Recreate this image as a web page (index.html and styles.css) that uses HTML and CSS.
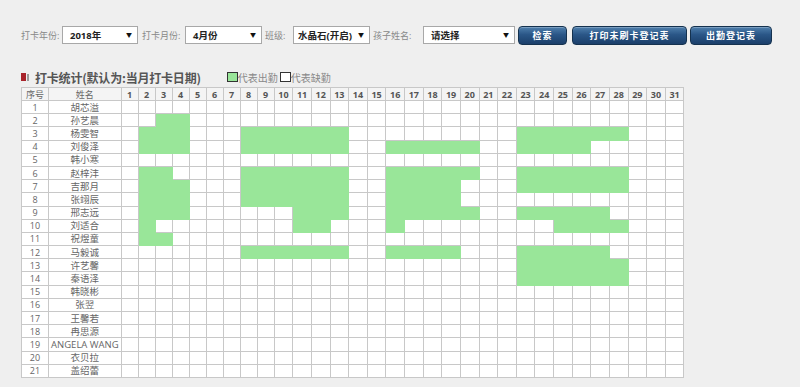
FILE: index.html
```html
<!DOCTYPE html>
<html lang="zh">
<head>
<meta charset="utf-8">
<title>打卡统计</title>
<link rel="stylesheet" href="styles.css">
</head>
<body>
<div class="toolbar">
  <span class="lbl lbl-year">打卡年份:</span>
  <div class="sel sel-year">2018年<span class="arr">▼</span></div>
  <span class="lbl lbl-month">打卡月份:</span>
  <div class="sel sel-month">4月份<span class="arr">▼</span></div>
  <span class="lbl lbl-class">班级:</span>
  <div class="sel sel-class">水晶石(开启)<span class="arr">▼</span></div>
  <span class="lbl lbl-child">孩子姓名:</span>
  <div class="sel sel-child">请选择<span class="arr">▼</span></div>
  <button class="btn btn-search">检索</button>
  <button class="btn btn-print">打印未刷卡登记表</button>
  <button class="btn btn-export">出勤登记表</button>
</div>

<div class="section-head">
  <span class="mark"></span><span class="mark2"></span>
  <span class="title">打卡统计(默认为:当月打卡日期)</span>
  <span class="legend"><span class="box"></span>代表出勤<span class="box box-empty"></span>代表缺勤</span>
</div>

<table class="grid">
<colgroup>
<col class="c-no"><col class="c-name">
<col class="c-d"><col class="c-d"><col class="c-d"><col class="c-d"><col class="c-d"><col class="c-d"><col class="c-d"><col class="c-d"><col class="c-d">
<col class="c-dd"><col class="c-dd"><col class="c-dd"><col class="c-dd"><col class="c-dd"><col class="c-dd"><col class="c-dd"><col class="c-dd"><col class="c-dd"><col class="c-dd"><col class="c-dd"><col class="c-dd"><col class="c-dd"><col class="c-dd"><col class="c-dd"><col class="c-dd"><col class="c-dd"><col class="c-dd"><col class="c-dd"><col class="c-dd"><col class="c-dd"><col class="c-dd">
</colgroup>
<thead>
<tr><th class="h-txt">序号</th><th class="h-txt">姓名</th><th>1</th><th>2</th><th>3</th><th>4</th><th>5</th><th>6</th><th>7</th><th>8</th><th>9</th><th>10</th><th>11</th><th>12</th><th>13</th><th>14</th><th>15</th><th>16</th><th>17</th><th>18</th><th>19</th><th>20</th><th>21</th><th>22</th><th>23</th><th>24</th><th>25</th><th>26</th><th>27</th><th>28</th><th>29</th><th>30</th><th>31</th></tr>
</thead>
<tbody>
<tr><td>1</td><td class="name">胡芯溢</td><td></td><td></td><td></td><td></td><td></td><td></td><td></td><td></td><td></td><td></td><td></td><td></td><td></td><td></td><td></td><td></td><td></td><td></td><td></td><td></td><td></td><td></td><td></td><td></td><td></td><td></td><td></td><td></td><td></td><td></td><td></td></tr>
<tr><td>2</td><td class="name">孙艺晨</td><td></td><td></td><td class="g"></td><td class="g"></td><td></td><td></td><td></td><td></td><td></td><td></td><td></td><td></td><td></td><td></td><td></td><td></td><td></td><td></td><td></td><td></td><td></td><td></td><td></td><td></td><td></td><td></td><td></td><td></td><td></td><td></td><td></td></tr>
<tr><td>3</td><td class="name">杨雯智</td><td></td><td class="g"></td><td class="g"></td><td class="g"></td><td></td><td></td><td></td><td class="g"></td><td class="g"></td><td class="g"></td><td class="g"></td><td class="g"></td><td class="g"></td><td></td><td></td><td></td><td></td><td></td><td></td><td></td><td></td><td></td><td class="g"></td><td class="g"></td><td class="g"></td><td class="g"></td><td class="g"></td><td class="g"></td><td></td><td></td><td></td></tr>
<tr><td>4</td><td class="name">刘俊泽</td><td></td><td class="g"></td><td class="g"></td><td class="g"></td><td></td><td></td><td></td><td class="g"></td><td class="g"></td><td class="g"></td><td class="g"></td><td class="g"></td><td class="g"></td><td></td><td></td><td class="g"></td><td class="g"></td><td class="g"></td><td class="g"></td><td class="g"></td><td></td><td></td><td class="g"></td><td class="g"></td><td class="g"></td><td class="g"></td><td></td><td></td><td></td><td></td><td></td></tr>
<tr><td>5</td><td class="name">韩小寒</td><td></td><td></td><td></td><td></td><td></td><td></td><td></td><td></td><td></td><td></td><td></td><td></td><td></td><td></td><td></td><td></td><td></td><td></td><td></td><td></td><td></td><td></td><td></td><td></td><td></td><td></td><td></td><td></td><td></td><td></td><td></td></tr>
<tr><td>6</td><td class="name">赵梓沣</td><td></td><td class="g"></td><td class="g"></td><td></td><td></td><td></td><td></td><td class="g"></td><td class="g"></td><td class="g"></td><td class="g"></td><td class="g"></td><td class="g"></td><td></td><td></td><td class="g"></td><td class="g"></td><td class="g"></td><td class="g"></td><td class="g"></td><td></td><td></td><td class="g"></td><td class="g"></td><td class="g"></td><td class="g"></td><td class="g"></td><td class="g"></td><td></td><td></td><td></td></tr>
<tr><td>7</td><td class="name">吉那月</td><td></td><td class="g"></td><td class="g"></td><td class="g"></td><td></td><td></td><td></td><td class="g"></td><td class="g"></td><td class="g"></td><td class="g"></td><td class="g"></td><td class="g"></td><td></td><td></td><td class="g"></td><td class="g"></td><td class="g"></td><td class="g"></td><td></td><td></td><td></td><td class="g"></td><td class="g"></td><td class="g"></td><td class="g"></td><td class="g"></td><td class="g"></td><td></td><td></td><td></td></tr>
<tr><td>8</td><td class="name">张翊辰</td><td></td><td class="g"></td><td class="g"></td><td class="g"></td><td></td><td></td><td></td><td class="g"></td><td class="g"></td><td class="g"></td><td class="g"></td><td class="g"></td><td class="g"></td><td></td><td></td><td class="g"></td><td class="g"></td><td class="g"></td><td class="g"></td><td></td><td></td><td></td><td></td><td></td><td></td><td></td><td></td><td></td><td></td><td></td><td></td></tr>
<tr><td>9</td><td class="name">邢志远</td><td></td><td class="g"></td><td class="g"></td><td class="g"></td><td></td><td></td><td></td><td></td><td></td><td></td><td class="g"></td><td class="g"></td><td class="g"></td><td></td><td></td><td class="g"></td><td class="g"></td><td class="g"></td><td class="g"></td><td class="g"></td><td></td><td></td><td class="g"></td><td class="g"></td><td class="g"></td><td class="g"></td><td class="g"></td><td></td><td></td><td></td><td></td></tr>
<tr><td>10</td><td class="name">刘适合</td><td></td><td class="g"></td><td></td><td></td><td></td><td></td><td></td><td></td><td></td><td></td><td class="g"></td><td class="g"></td><td></td><td></td><td></td><td class="g"></td><td></td><td></td><td></td><td></td><td></td><td></td><td></td><td></td><td class="g"></td><td class="g"></td><td class="g"></td><td class="g"></td><td></td><td></td><td></td></tr>
<tr><td>11</td><td class="name">祝煜童</td><td></td><td class="g"></td><td class="g"></td><td></td><td></td><td></td><td></td><td></td><td></td><td></td><td></td><td></td><td></td><td></td><td></td><td></td><td></td><td></td><td></td><td></td><td></td><td></td><td></td><td></td><td></td><td></td><td></td><td></td><td></td><td></td><td></td></tr>
<tr><td>12</td><td class="name">马毅诚</td><td></td><td></td><td></td><td></td><td></td><td></td><td></td><td class="g"></td><td class="g"></td><td class="g"></td><td class="g"></td><td class="g"></td><td class="g"></td><td></td><td></td><td class="g"></td><td class="g"></td><td class="g"></td><td class="g"></td><td></td><td></td><td></td><td class="g"></td><td class="g"></td><td class="g"></td><td class="g"></td><td class="g"></td><td></td><td></td><td></td><td></td></tr>
<tr><td>13</td><td class="name">许艺馨</td><td></td><td></td><td></td><td></td><td></td><td></td><td></td><td></td><td></td><td></td><td></td><td></td><td></td><td></td><td></td><td></td><td></td><td></td><td></td><td></td><td></td><td></td><td class="g"></td><td class="g"></td><td class="g"></td><td class="g"></td><td class="g"></td><td class="g"></td><td></td><td></td><td></td></tr>
<tr><td>14</td><td class="name">秦语泽</td><td></td><td></td><td></td><td></td><td></td><td></td><td></td><td></td><td></td><td></td><td></td><td></td><td></td><td></td><td></td><td></td><td></td><td></td><td></td><td></td><td></td><td></td><td class="g"></td><td class="g"></td><td class="g"></td><td class="g"></td><td class="g"></td><td class="g"></td><td></td><td></td><td></td></tr>
<tr><td>15</td><td class="name">韩晓彬</td><td></td><td></td><td></td><td></td><td></td><td></td><td></td><td></td><td></td><td></td><td></td><td></td><td></td><td></td><td></td><td></td><td></td><td></td><td></td><td></td><td></td><td></td><td></td><td></td><td></td><td></td><td></td><td></td><td></td><td></td><td></td></tr>
<tr><td>16</td><td class="name">张翌</td><td></td><td></td><td></td><td></td><td></td><td></td><td></td><td></td><td></td><td></td><td></td><td></td><td></td><td></td><td></td><td></td><td></td><td></td><td></td><td></td><td></td><td></td><td></td><td></td><td></td><td></td><td></td><td></td><td></td><td></td><td></td></tr>
<tr><td>17</td><td class="name">王馨若</td><td></td><td></td><td></td><td></td><td></td><td></td><td></td><td></td><td></td><td></td><td></td><td></td><td></td><td></td><td></td><td></td><td></td><td></td><td></td><td></td><td></td><td></td><td></td><td></td><td></td><td></td><td></td><td></td><td></td><td></td><td></td></tr>
<tr><td>18</td><td class="name">冉思源</td><td></td><td></td><td></td><td></td><td></td><td></td><td></td><td></td><td></td><td></td><td></td><td></td><td></td><td></td><td></td><td></td><td></td><td></td><td></td><td></td><td></td><td></td><td></td><td></td><td></td><td></td><td></td><td></td><td></td><td></td><td></td></tr>
<tr><td>19</td><td class="name">ANGELA WANG</td><td></td><td></td><td></td><td></td><td></td><td></td><td></td><td></td><td></td><td></td><td></td><td></td><td></td><td></td><td></td><td></td><td></td><td></td><td></td><td></td><td></td><td></td><td></td><td></td><td></td><td></td><td></td><td></td><td></td><td></td><td></td></tr>
<tr><td>20</td><td class="name">衣贝拉</td><td></td><td></td><td></td><td></td><td></td><td></td><td></td><td></td><td></td><td></td><td></td><td></td><td></td><td></td><td></td><td></td><td></td><td></td><td></td><td></td><td></td><td></td><td></td><td></td><td></td><td></td><td></td><td></td><td></td><td></td><td></td></tr>
<tr><td>21</td><td class="name">盖绍蕾</td><td></td><td></td><td></td><td></td><td></td><td></td><td></td><td></td><td></td><td></td><td></td><td></td><td></td><td></td><td></td><td></td><td></td><td></td><td></td><td></td><td></td><td></td><td></td><td></td><td></td><td></td><td></td><td></td><td></td><td></td><td></td></tr>
</tbody>
</table>
</body>
</html>
```

FILE: styles.css
```css
* { box-sizing: border-box; }

body {
  margin: 0;
  background: #efefef;
  font-family: "Open Sans", "Noto Sans CJK SC", sans-serif;
  color: #555;
}

/* ---------- toolbar ---------- */
.toolbar {
  display: flex;
  align-items: center;
  padding: 26px 0 0 21px;
  height: 44px;
}

.lbl {
  flex: none;
  font-size: 9px;
  color: #888;
  white-space: nowrap;
}
.lbl-year  { width: 41px; }
.lbl-month { width: 47px; padding-left: 4px; }
.lbl-class { width: 31px; padding-left: 3px; }
.lbl-child { width: 53px; padding-left: 3px; }

.sel {
  flex: none;
  position: relative;
  display: flex;
  align-items: center;
  height: 18px;
  padding-left: 7px;
  background: #fff;
  border: 1px solid #a8a8a8;
  font-size: 9.5px;
  font-weight: bold;
  color: #222;
  white-space: nowrap;
}
.sel-year  { width: 76px; }
.sel-month { width: 77px; }
.sel-class { width: 77px; padding-left: 4px; }
.sel-child { width: 92px; }

.arr {
  position: absolute;
  right: 5px;
  top: 5px;
  font-size: 6px;
  line-height: 6px;
  color: #111;
}

.btn {
  flex: none;
  display: flex;
  align-items: center;
  justify-content: center;
  height: 19px;
  padding: 0;
  border: 1px solid #15324f;
  border-radius: 4px;
  background: linear-gradient(#4f80ad 0%, #2a5687 45%, #1b3f6a 100%);
  box-shadow: inset 0 1px 0 rgba(255, 255, 255, 0.25);
  color: #fff;
  font-family: "Noto Sans CJK SC", sans-serif;
  font-size: 9px;
  font-weight: bold;
  letter-spacing: 1px;
}
.btn-search { width: 49px; margin-left: 3px; }
.btn-print  { width: 115px; margin-left: 5px; }
.btn-export { width: 82px; margin-left: 3px; }

/* ---------- section heading ---------- */
.section-head {
  display: flex;
  align-items: center;
  height: 14px;
  margin: 26px 0 0 21px;
}
.mark {
  width: 5px;
  height: 8px;
  background: #a8232b;
}
.mark2 {
  width: 2px;
  height: 7px;
  margin-left: 1px;
  background: #9a9a9a;
}
.title {
  margin-left: 6px;
  font-family: "Noto Sans CJK SC", sans-serif;
  font-size: 12px;
  font-weight: bold;
  color: #555;
  letter-spacing: -0.2px;
}
.legend {
  display: flex;
  align-items: center;
  margin-left: 26px;
  font-family: "Noto Sans CJK SC", sans-serif;
  font-size: 10px;
  color: #888;
}
.box {
  width: 11px;
  height: 10px;
  border: 1px solid #333;
  background: #99e699;
}
.box-empty {
  margin-left: 2px;
  background: #fff;
}

/* ---------- table ---------- */
.grid {
  margin: 3px 0 0 21px;
  width: 663px;
  table-layout: fixed;
  border-collapse: separate;
  border-spacing: 0;
  border-left: 1px solid #c8c8c8;
  border-top: 1px solid #c8c8c8;
  font-size: 9px;
  color: #666;
}
.c-no   { width: 27px; }
.c-name { width: 72.7px; }
.c-d    { width: 17px; }
.c-dd   { width: 18.64px; }

.grid th,
.grid td {
  padding: 0;
  border-right: 1px solid #c8c8c8;
  border-bottom: 1px solid #c8c8c8;
  text-align: center;
  line-height: 11px;
  white-space: nowrap;
  overflow: hidden;
}
.grid thead tr { height: 13px; }
.grid tbody tr { height: 13.2px; }

.grid th {
  background: #f4f4f4;
  font-weight: bold;
  color: #555;
}
.grid th.h-txt {
  font-weight: normal;
  color: #666;
}
.grid td { background: #fff; }
.grid td.name { font-size: 9.5px; }
.grid td.g {
  background: #99e699;
  border-color: #99e699;
}
```
